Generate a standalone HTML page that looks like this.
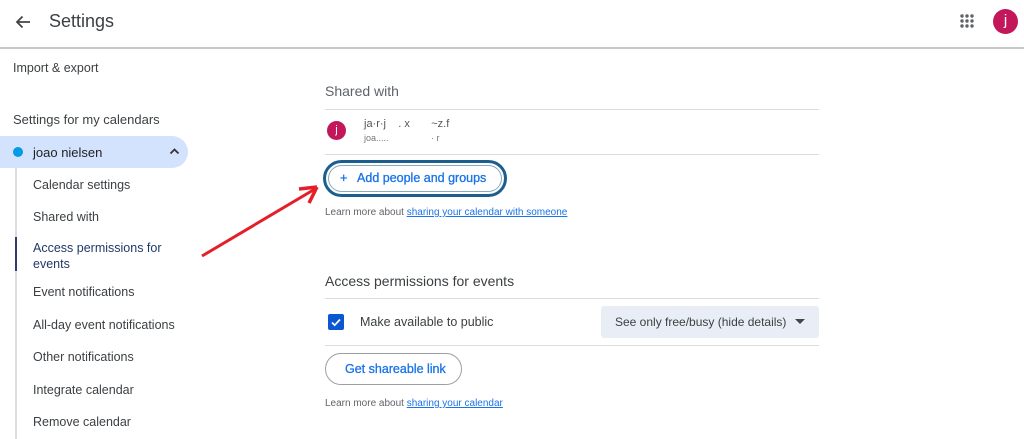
<!DOCTYPE html>
<html><head><meta charset="utf-8"><style>
*{margin:0;padding:0;box-sizing:border-box}
body{width:1024px;height:439px;overflow:hidden;background:#fff;font-family:"Liberation Sans",sans-serif;color:#3c4043;position:relative}
.a{position:absolute;white-space:nowrap}
.s{font-size:12.5px;color:#3c4043}
.hr{position:absolute;height:1px;background:#dadce0}
a{color:#1a73e8;text-decoration:underline}
</style></head><body>
<div class="hr" style="left:0;top:47px;width:1024px;background:#c8c8c8;height:2px"></div>
<svg class="a" style="left:14px;top:13px" width="18" height="18" viewBox="0 0 18 18"><path d="M16 9H3M8.5 3.5L3 9l5.5 5.5" stroke="#444" stroke-width="1.8" fill="none"/></svg>
<div class="a" style="left:49px;top:11px;font-size:18px;color:#3c4043">Settings</div>
<svg class="a" style="left:960px;top:14px" width="14" height="14"><g fill="#5f6368"><circle cx="2" cy="2" r="1.7"/><circle cx="7" cy="2" r="1.7"/><circle cx="12" cy="2" r="1.7"/><circle cx="2" cy="7" r="1.7"/><circle cx="7" cy="7" r="1.7"/><circle cx="12" cy="7" r="1.7"/><circle cx="2" cy="12" r="1.7"/><circle cx="7" cy="12" r="1.7"/><circle cx="12" cy="12" r="1.7"/></g></svg>
<div class="a" style="left:993px;top:9px;width:25px;height:25px;border-radius:50%;background:#c2185b;color:#fff;font-size:15px;text-align:center;line-height:24px">j</div>

<div class="a s" style="left:13px;top:61px">Import &amp; export</div>
<div class="a" style="left:13px;top:112px;font-size:13px;color:#3c4043">Settings for my calendars</div>
<div class="a" style="left:0;top:136px;width:188px;height:32px;background:#d3e3fd;border-radius:0 16px 16px 0"></div>
<div class="a" style="left:13px;top:147px;width:10px;height:10px;border-radius:50%;background:#039be5"></div>
<div class="a" style="left:33px;top:145px;font-size:13px;color:#1f1f1f">joao nielsen</div>
<svg class="a" style="left:169px;top:147px" width="11" height="8"><path d="M1.5 6.5L5.5 2.5 9.5 6.5" stroke="#333" stroke-width="1.8" fill="none"/></svg>
<div class="a" style="left:15px;top:168px;width:2px;height:271px;background:#dadce0"></div>
<div class="a" style="left:15px;top:237px;width:2px;height:34px;background:#2c3d6b"></div>
<div class="a s" style="left:33px;top:178px">Calendar settings</div>
<div class="a s" style="left:33px;top:210px">Shared with</div>
<div class="a" style="left:33px;top:240px;font-size:12.5px;color:#1f3a68;line-height:16px">Access permissions for<br>events</div>
<div class="a s" style="left:33px;top:285px">Event notifications</div>
<div class="a s" style="left:33px;top:318px">All-day event notifications</div>
<div class="a s" style="left:33px;top:350px">Other notifications</div>
<div class="a s" style="left:33px;top:383px">Integrate calendar</div>
<div class="a s" style="left:33px;top:415px">Remove calendar</div>

<div class="a" style="left:325px;top:83px;font-size:14px;color:#5f6368">Shared with</div>
<div class="hr" style="left:325px;top:109px;width:494px"></div>
<div class="a" style="left:327px;top:121px;width:19px;height:19px;border-radius:50%;background:#c2185b;color:#fff;font-size:11px;text-align:center;line-height:18px">j</div>
<div class="a" style="left:364px;top:118px;font-size:11px;color:#555">ja&middot;r&middot;j &nbsp;&nbsp; . x &nbsp;&nbsp;&nbsp;&nbsp;&nbsp; ~z.f</div>
<div class="a" style="left:364px;top:133px;font-size:9px;color:#777">joa..... &nbsp;&nbsp;&nbsp;&nbsp;&nbsp;&nbsp;&nbsp;&nbsp;&nbsp;&nbsp;&nbsp;&nbsp;&nbsp;&nbsp;&nbsp; &middot; r</div>
<div class="hr" style="left:325px;top:154px;width:494px"></div>
<div class="a" style="left:323px;top:160px;width:184px;height:37px;border:3px solid #1c5f8f;border-radius:19px;box-shadow:inset 0 0 0 2px #fff,inset 0 0 0 3px #8ab"></div>
<div class="a" style="left:340px;top:171px;font-size:12.5px;color:#1a73e8;-webkit-text-stroke:0.3px #1a73e8">+&nbsp;&nbsp; Add people and groups</div>
<div class="a" style="left:325px;top:207px;font-size:10px;color:#5f6368">Learn more about <a>sharing your calendar with someone</a></div>

<svg class="a" style="left:195px;top:180px" width="130" height="85"><path d="M7 76L120 9" stroke="#e3202a" stroke-width="3"/><path d="M122 7L104 9M122 7L114 23" stroke="#e3202a" stroke-width="3.5" fill="none"/></svg>

<div class="a" style="left:325px;top:273px;font-size:14px;color:#3c4043">Access permissions for events</div>
<div class="hr" style="left:325px;top:298px;width:494px"></div>
<div class="a" style="left:328px;top:314px;width:16px;height:16px;border-radius:2px;background:#0b57d0"></div>
<svg class="a" style="left:330px;top:316px" width="12" height="12"><path d="M2 6.5l2.7 2.7L10 3.5" stroke="#fff" stroke-width="1.7" fill="none"/></svg>
<div class="a" style="left:360px;top:315px;font-size:12.5px;color:#3c4043">Make available to public</div>
<div class="a" style="left:601px;top:306px;width:218px;height:32px;background:#e9eef6;border-radius:3px"></div>
<div class="a" style="left:615px;top:315px;font-size:12px;color:#3c4043">See only free/busy (hide details)</div>
<svg class="a" style="left:795px;top:319px" width="10" height="6"><path d="M0 0h10L5 5z" fill="#444"/></svg>
<div class="hr" style="left:325px;top:345px;width:494px"></div>
<div class="a" style="left:325px;top:353px;width:137px;height:32px;border:1px solid #9aa0a6;border-radius:16px"></div>
<div class="a" style="left:345px;top:362px;font-size:12.5px;color:#1a73e8;-webkit-text-stroke:0.3px #1a73e8">Get shareable link</div>
<div class="a" style="left:325px;top:398px;font-size:10px;color:#5f6368">Learn more about <a>sharing your calendar</a></div>
</body></html>
